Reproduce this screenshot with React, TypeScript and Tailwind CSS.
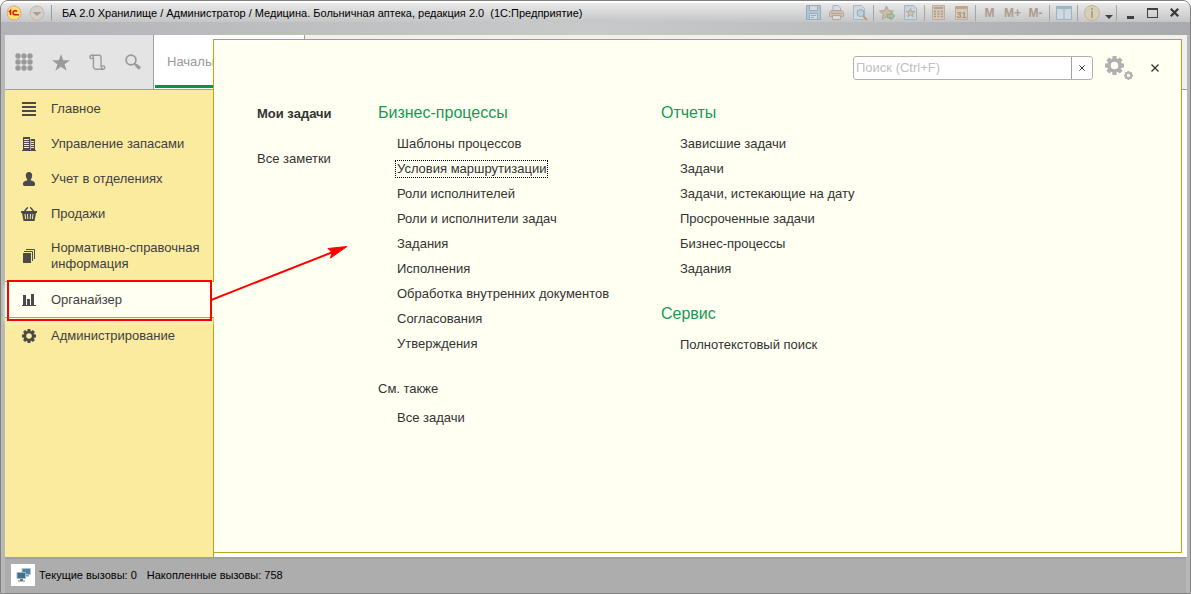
import type { ReactNode } from "react"

interface NavItem {
  label: string
  icon: ReactNode
  active?: boolean
  tall?: boolean
}

interface LinkListProps {
  items: string[]
  focused?: string
}

const navItems: NavItem[] = [
  { label: "Главное", icon: <LinesIcon /> },
  { label: "Управление запасами", icon: <BuildingIcon /> },
  { label: "Учет в отделениях", icon: <PersonIcon /> },
  { label: "Продажи", icon: <BasketIcon /> },
  { label: "Нормативно-справочная информация", icon: <BooksIcon />, tall: true },
  { label: "Органайзер", icon: <ChartIcon />, active: true },
  { label: "Администрирование", icon: <GearIcon size={14} /> },
]

const processes = [
  "Шаблоны процессов",
  "Условия маршрутизации",
  "Роли исполнителей",
  "Роли и исполнители задач",
  "Задания",
  "Исполнения",
  "Обработка внутренних документов",
  "Согласования",
  "Утверждения",
]

const reports = [
  "Зависшие задачи",
  "Задачи",
  "Задачи, истекающие на дату",
  "Просроченные задачи",
  "Бизнес-процессы",
  "Задания",
]

function LinesIcon() {
  return (
    <svg width="14" height="14" viewBox="0 0 14 14" fill="currentColor">
      <path d="M0 0h14v2H0zM0 4h14v2H0zM0 8h14v2H0zM0 12h14v2H0z" />
    </svg>
  )
}

function BuildingIcon() {
  return (
    <svg width="14" height="14" viewBox="0 0 14 14" fill="currentColor">
      <path d="M1 0h7v13H1zM8 2h5v11H8zM0 13h14v1H0z" />
      <path d="M2 2.5h5M2 4.5h5M2 6.5h5M2 8.5h5M2 10.5h5M9 4.5h3M9 6.5h3M9 8.5h3M9 10.5h3" stroke="#fbeb9e" />
      <path d="M8.500 2v11" stroke="#fbeb9e" strokeWidth=".6" />
    </svg>
  )
}

function PersonIcon() {
  return (
    <svg width="12" height="14" viewBox="0 0 12 14" fill="currentColor">
      <path d="M6 0c2 0 3.200 1.300 3.200 3.300S8 7.500 7.500 8c.5.700 4.500 1 4.500 3.500V13l-1 1H1l-1-1v-1.500C0 9 4 8.700 4.500 8 4 7.500 2.800 5.300 2.800 3.300S4 0 6 0z" />
    </svg>
  )
}

function GearIcon({ size }: { size: number }) {
  return (
    <svg width={size} height={size} viewBox="0 0 20 20">
      <circle cx="10" cy="10" r="5.800" fill="none" stroke="currentColor" strokeWidth="3.600" />
      {[0, 45, 90, 135].map((angle) => (
        <path key={angle} d="M8 0h4l.5 4h-5zM8 20h4l.5-4h-5z" fill="currentColor" transform={`rotate(${angle} 10 10)`} />
      ))}
    </svg>
  )
}

function BasketIcon() {
  return (
    <svg width="16" height="14" viewBox="0 0 16 14">
      <path d="M3 5 6 1M13 5 10 1M6 .7h1M9 .7h1" stroke="currentColor" strokeWidth="1.4" fill="none" />
      <path d="M0 4h16v2h-1l-1.500 8h-11L1 6H0z" fill="currentColor" />
      <path d="m4 7 .6 5M6.500 7l.3 5M9.500 7l-.3 5M12 7l-.6 5" stroke="#fbeb9e" />
    </svg>
  )
}

function BooksIcon() {
  return (
    <svg width="14" height="14" viewBox="0 0 14 14">
      <path d="M1 4h8v10H1z" fill="currentColor" />
      <path d="M2 2.500h8.500V12M4 .500h8.500V10" stroke="currentColor" fill="none" />
    </svg>
  )
}

function ChartIcon() {
  return (
    <svg width="14" height="12" viewBox="0 0 14 12" fill="currentColor">
      <path d="M0 11h14v1H0zM1 1h3v10H1zM5 5h3v6H5zM9 0h3v11H9z" />
    </svg>
  )
}

function LogoIcon() {
  return (
    <svg width="16" height="16" viewBox="0 0 16 16">
      <circle cx="8" cy="8" r="7" fill="#fde36a" stroke="#e0a090" />
      <path d="M3 7l1.500-1.500V10M11 6.500C9.500 5 7 5.500 7 7.700S8.500 9.700 10 9.700H13" stroke="#e01818" strokeWidth="1.600" fill="none" />
    </svg>
  )
}

function MenuDownIcon() {
  return (
    <svg width="16" height="16" viewBox="0 0 16 16">
      <circle cx="8" cy="8" r="7" fill="#d6cfca" stroke="#c2b5ad" />
      <path d="M3.500 7h9L8 11z" fill="#a89f9a" />
    </svg>
  )
}

function SaveIcon() {
  return (
    <svg width="15" height="15" viewBox="0 0 15 15" fill="none" stroke="#94aebf">
      <path d="M.5.5h14v14H.5z" fill="#b3c5d0" />
      <path d="M3.500.5h8v5h-8zM3.500 8.500h8v6h-8z" fill="#d3d9dc" />
      <path d="M5 10.500h5M5 12.500h3" />
    </svg>
  )
}

function PrinterIcon() {
  return (
    <svg width="15" height="15" viewBox="0 0 15 15" fill="none" stroke="#b5a799">
      <path d="M4 5V.5h5L11.500 3v2" fill="#d8dde0" stroke="#a3b3be" />
      <path d="M2 5.500h11l1.500 2v4H.5v-4z" fill="#cdbfb1" />
      <path d="M3.500 10.500h8v4h-8z" fill="#dcdcdc" />
      <path d="M2 8.500h11" />
    </svg>
  )
}

function PreviewIcon() {
  return (
    <svg width="16" height="16" viewBox="0 0 16 16" fill="none">
      <path d="M1.500.5h8l3 3v11h-11z" fill="#cfd8dd" stroke="#a8bac5" />
      <circle cx="8.500" cy="8" r="3.500" fill="#bcd0dc" stroke="#8fa9ba" />
      <path d="m11 11 4 4" stroke="#b79d86" strokeWidth="2" />
    </svg>
  )
}

function AddFavoriteIcon() {
  return (
    <svg width="17" height="16" viewBox="0 0 17 16">
      <path d="m7.500 1 2 4.500 5 .5-3.700 3.300 1 5-4.300-2.500-4.300 2.500 1-5L.5 6l5-.5z" fill="#c8bda9" stroke="#b0a596" />
      <path d="M8 9.500h4V7l4 4-4 4v-2.500H8z" fill="#a3bf9f" stroke="#8ca88a" strokeWidth=".8" />
    </svg>
  )
}

function FavoritesIcon() {
  return (
    <svg width="13" height="15" viewBox="0 0 13 15">
      <path d="M.5.5h9l3 3v11H.5z" fill="#cad4da" stroke="#a4b5c0" />
      <path d="m6.500 3.500 1.200 3h3l-2.400 2 .9 3.200-2.700-1.900-2.700 1.900.9-3.200-2.400-2h3z" fill="#cfc2ae" stroke="#a99f94" strokeWidth=".8" />
    </svg>
  )
}

function CalculatorIcon() {
  return (
    <svg width="13" height="15" viewBox="0 0 13 15">
      <path d="M.5.5h12v14H.5z" fill="#d5c8b6" stroke="#bfae9b" />
      <path d="M2 2h9v2H2z" fill="#b1a294" />
      <path d="M2 6.500h9M2 9h9M2 11.500h9" stroke="#a99a8d" strokeWidth="1.500" strokeDasharray="2 1.500" />
    </svg>
  )
}

function CalendarIcon() {
  return (
    <svg width="13" height="15" viewBox="0 0 13 15">
      <path d="M.5 1.500h12v13H.5z" fill="#d6cab9" stroke="#bfae9b" />
      <path d="M1 1h11v3H1z" fill="#c1a48a" />
      <text x="6.500" y="13" textAnchor="middle" fontSize="9" fontFamily="Liberation Sans, sans-serif" fill="#a8927f">31</text>
    </svg>
  )
}

function ColumnsIcon() {
  return (
    <svg width="16" height="14" viewBox="0 0 16 14">
      <path d="M.5.5h15v13H.5zM8 3v11" fill="#ced9df" stroke="#9bb3c2" />
      <path d="M1 1h14v2H1z" fill="#9fb7c6" />
    </svg>
  )
}

function InfoIcon() {
  return (
    <svg width="16" height="16" viewBox="0 0 16 16">
      <circle cx="8" cy="8" r="7.500" fill="#d7ceb8" stroke="#c6b3a0" />
      <path d="M7 3h2v2H7zM7 6h2v7H7z" fill="#a6aa86" />
    </svg>
  )
}

function GridIcon() {
  return (
    <svg width="18" height="18" viewBox="0 0 18 18" fill="currentColor">
      {[3, 9, 15].map((y) => [3, 9, 15].map((x) => <circle key={`${x}-${y}`} cx={x} cy={y} r="2.700" />))}
    </svg>
  )
}

function StarIcon() {
  return (
    <svg width="18" height="17" viewBox="0 0 18 17" fill="currentColor">
      <path d="m9 0 2.200 6.200H18l-5.400 4 2 6.600L9 12.800l-5.600 4 2-6.600L0 6.200h6.800z" />
    </svg>
  )
}

function ScrollIcon() {
  return (
    <svg width="17" height="17" viewBox="0 0 17 17" fill="none" stroke="currentColor" strokeWidth="1.400">
      <path d="M2.600 1.200H10a2 2 0 0 1 2 2v9.300M4.400 4v8.500a2.800 2.800 0 0 0 2.800 2.800h7" />
      <circle cx="2.600" cy="2.900" r="1.700" />
      <circle cx="14.100" cy="13.600" r="1.700" />
    </svg>
  )
}

function SearchIcon() {
  return (
    <svg width="16" height="16" viewBox="0 0 16 16" fill="none" stroke="currentColor">
      <circle cx="6" cy="6" r="4.900" strokeWidth="1.800" />
      <path d="m9.500 9.500 2 2" strokeWidth="1.800" />
      <path d="m11 11 4 3.500" strokeWidth="3" />
    </svg>
  )
}

function CrossIcon({ size }: { size: number }) {
  return (
    <svg width={size} height={size} viewBox="0 0 8 8" stroke="currentColor" strokeWidth="1.300">
      <path d="m.5.5 7 7M7.500.5l-7 7" />
    </svg>
  )
}

function MonitorsIcon() {
  return (
    <svg width="15" height="14" viewBox="0 0 15 14">
      <path d="M6 .5h8.500v6H6z" fill="#4d82a6" stroke="#b5c0c6" />
      <path d="M9 7h4v1.500H9z" fill="#8d979c" />
      <path d="M1 4.500h8.500v6H1z" fill="#3c7095" stroke="#a9b5bc" />
      <path d="M4 11h3v1.500H4zM2 12.500h7v1H2z" fill="#6f7a80" />
    </svg>
  )
}

function ToolButton({ label, children }: { label: string; children: ReactNode }) {
  return (
    <button type="button" aria-label={label} className="flex h-5 w-[23px] items-center justify-center text-[12px] font-bold text-[#ad9b8d]">
      {children}
    </button>
  )
}

function Separator() {
  return <span className="mx-0.5 h-4 w-px bg-[#a5a5a5]" />
}

function TitleBar() {
  return (
    <header className="h-[34px] bg-linear-to-r from-[#b4b4b8] via-[#c8caca] to-[#a9aaaf]">
      <div className="flex h-[21px] items-center border-t-2 border-white bg-linear-to-b from-[#e9e9e9] to-[#c4c5c6] pr-[5px] pl-[5px]">
        <LogoIcon />
        <button type="button" aria-label="Меню" className="ml-[7px]">
          <MenuDownIcon />
        </button>
        <span className="mr-2.5 ml-1.5 h-4 w-px bg-[#9d9d9d]" />
        <h1 className="min-w-0 flex-1 truncate text-[11px] text-black">
          БА 2.0 Хранилище / Администратор / Медицина. Больничная аптека, редакция 2.0&nbsp; (1С:Предприятие)
        </h1>
        <ToolButton label="Сохранить"><SaveIcon /></ToolButton>
        <ToolButton label="Печать"><PrinterIcon /></ToolButton>
        <ToolButton label="Просмотр"><PreviewIcon /></ToolButton>
        <Separator />
        <ToolButton label="Добавить в избранное"><AddFavoriteIcon /></ToolButton>
        <ToolButton label="Избранное"><FavoritesIcon /></ToolButton>
        <Separator />
        <ToolButton label="Калькулятор"><CalculatorIcon /></ToolButton>
        <ToolButton label="Календарь"><CalendarIcon /></ToolButton>
        <Separator />
        <ToolButton label="M">M</ToolButton>
        <ToolButton label="M+">M+</ToolButton>
        <ToolButton label="M-">M-</ToolButton>
        <Separator />
        <ToolButton label="Окна"><ColumnsIcon /></ToolButton>
        <Separator />
        <ToolButton label="О программе"><InfoIcon /></ToolButton>
        <button type="button" aria-label="Еще" className="flex h-5 w-[11px] items-end justify-center pb-1 text-[#404040]">
          <svg width="8" height="4" viewBox="0 0 8 4" fill="currentColor"><path d="M0 0h8L4 4z" /></svg>
        </button>
        <Separator />
        <button type="button" aria-label="Свернуть" className="flex h-5 w-[22px] items-end justify-center pb-1">
          <span className="h-[3px] w-[7px] bg-[#404040]" />
        </button>
        <button type="button" aria-label="Развернуть" className="flex h-5 w-[22px] items-center justify-center">
          <span className="h-2.5 w-[11px] border border-t-2 border-[#404040]" />
        </button>
        <button type="button" aria-label="Закрыть окно" className="flex h-5 w-[22px] items-center justify-center text-[#383838]">
          <svg width="9" height="9" viewBox="0 0 9 9" stroke="currentColor" strokeWidth="2.200"><path d="m.8.8 7.400 7.400M8.200.8.8 8.200" /></svg>
        </button>
      </div>
    </header>
  )
}

function Toolbar() {
  return (
    <div className="flex h-[55px] border-b border-[#a0a0a0] bg-[#f0f0f0]">
      <div className="flex w-[149px] items-center gap-[19px] border-r border-[#a0a0a0] bg-[#e4e4e4] pl-2.5 text-[#9a9a9a]">
        <button type="button" aria-label="Разделы"><GridIcon /></button>
        <button type="button" aria-label="Избранное"><StarIcon /></button>
        <button type="button" aria-label="История"><ScrollIcon /></button>
        <button type="button" aria-label="Поиск"><SearchIcon /></button>
      </div>
      <button type="button" className="flex w-[151px] border-r border-[#a0a0a0] bg-white px-px pb-px text-[13px] text-[#999999]">
        <span className="flex h-full w-full items-center border-b-3 border-[#009646] pt-1 pl-3">Начальная страница</span>
      </button>
    </div>
  )
}

// red frame and arrow pointing from the section to its menu
function Callout() {
  return (
    <>
      <span className="pointer-events-none absolute -top-0.5 right-0.5 -bottom-1 left-0.5 border-2 border-[#ff0000]" />
      <svg className="pointer-events-none absolute -top-10 left-[206px]" width="138" height="60" viewBox="0 0 138 60">
        <path d="M0 58 122 10" stroke="#ff0000" strokeWidth="2" />
        <path d="M136 4.500 117 6.500l4 4-1.500 5.500z" fill="#ff0000" stroke="#ff0000" />
      </svg>
    </>
  )
}

function NavRow({ item }: { item: NavItem }) {
  const link = (
    <a href="#section" className="flex h-full items-center gap-3.5 pl-4 text-[#3f3f3f]">
      <span className="flex w-4 shrink-0 justify-center text-[#4a4a4a]">{item.icon}</span>
      {item.label}
    </a>
  )
  if (item.active) {
    return (
      <li className="relative z-20 -mr-px h-[37px] border-y border-[#bfa92a] bg-[#fffff2] shadow-[0_5px_4px_#fdf5c8]">
        {link}
        <Callout />
      </li>
    )
  }
  return <li className={item.tall ? "h-[50px]" : "h-[35px]"}>{link}</li>
}

function LinkList({ items, focused }: LinkListProps) {
  return (
    <ul className="pl-[17px]">
      {items.map((item) => (
        <li key={item} className="flex h-[25px] items-center">
          <a
            href="#command"
            className={`border border-dotted px-px whitespace-nowrap ${item === focused ? "border-black" : "border-transparent"}`}
          >
            {item}
          </a>
        </li>
      ))}
    </ul>
  )
}

function GroupTitle({ children }: { children: ReactNode }) {
  return <h2 className="mb-1.5 h-[25px] text-[16px] leading-[25px] text-[#159a52]">{children}</h2>
}

function MenuPanel() {
  return (
    <section className="absolute top-1 right-[5px] bottom-1 left-[208px] z-10 border border-[#b9a41c] bg-[#fffff2]">
      <div className="flex items-center justify-end gap-3 pt-4 pr-4">
        <div className="flex h-6 w-60 rounded-[3px] border border-[#b0b0b0] bg-white">
          <input
            type="text"
            aria-label="Поиск"
            placeholder="Поиск (Ctrl+F)"
            className="min-w-0 flex-1 px-0.5 text-[13px] outline-none placeholder:text-[#c0c0c0]"
          />
          <button type="button" aria-label="Очистить" className="flex w-[21px] items-center justify-center border-l border-[#a0a0a0]">
            <CrossIcon size={6} />
          </button>
        </div>
        <button type="button" aria-label="Настройка" className="flex h-6 w-7 text-[#b0b0b0]">
          <GearIcon size={19} />
          <span className="self-end">
            <GearIcon size={9} />
          </span>
        </button>
        <button type="button" aria-label="Закрыть" className="flex w-5 justify-center">
          <CrossIcon size={8} />
        </button>
      </div>

      <div className="mt-5 flex pl-[43px]">
        <ul className="flex w-[121px] flex-col gap-5 pt-px leading-[25px]">
          <li><a href="#tasks" className="font-bold">Мои задачи</a></li>
          <li><a href="#notes">Все заметки</a></li>
        </ul>
        <div className="w-[283px]">
          <GroupTitle>Бизнес-процессы</GroupTitle>
          <LinkList items={processes} focused="Условия маршрутизации" />
          <h3 className="mt-5 mb-1 h-[25px] leading-[25px]">См. также</h3>
          <LinkList items={["Все задачи"]} />
        </div>
        <div className="flex-1">
          <GroupTitle>Отчеты</GroupTitle>
          <LinkList items={reports} />
          <div className="mt-5">
            <GroupTitle>Сервис</GroupTitle>
            <LinkList items={["Полнотекстовый поиск"]} />
          </div>
        </div>
      </div>
    </section>
  )
}

export default function App() {
  return (
    <div className="bg-white">
      <div className="flex min-h-screen flex-col overflow-hidden rounded-t-lg border border-[#808080] bg-[#b8b8b8] font-['Liberation_Sans',Arial,sans-serif] text-[13px] leading-4 text-[#333333]">
        <TitleBar />
        <main className="relative mr-[3px] ml-1 flex flex-1 flex-col bg-white">
          <Toolbar />
          <nav className="w-[209px] flex-1 border-r border-[#b9a41c] bg-[#fbeb9e] pt-px">
            <ul>
              {navItems.map((item) => (
                <NavRow key={item.label} item={item} />
              ))}
            </ul>
          </nav>
          <MenuPanel />
        </main>
        <footer className="mx-1 flex h-9 items-center border-t-2 border-[#a0a0a0] bg-[#adadad] pb-0.5 pl-1.5 text-[11px] text-black">
          <span className="mr-1 flex h-[22px] w-6 items-center justify-center bg-white">
            <MonitorsIcon />
          </span>
          <span className="mr-2.5">Текущие вызовы: 0</span>
          <span>Накопленные вызовы: 758</span>
        </footer>
      </div>
    </div>
  )
}
